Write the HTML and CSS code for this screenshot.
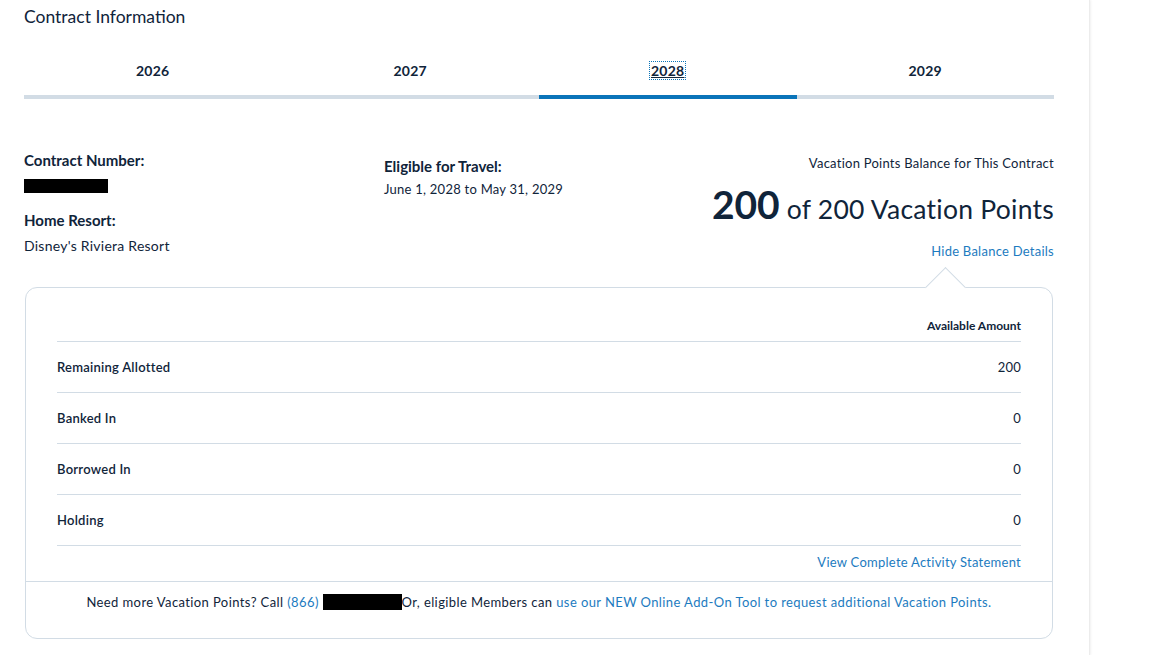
FILE: index.html
```html
<!DOCTYPE html>
<html lang="en">
<head>
    <meta charset="UTF-8">
    <meta name="viewport" content="width=device-width, initial-scale=1.0">
    <title>Contract Information</title>
    <link rel="stylesheet" href="styles.css">
</head>
<body>
    <div class="page">
        <h2 class="title">Contract Information</h2>

        <div class="tabs">
            <a class="tab">2026</a>
            <a class="tab">2027</a>
            <a class="tab active"><span class="focus">2028</span></a>
            <a class="tab">2029</a>
        </div>

        <div class="info">
            <div class="info-col">
                <div class="label">Contract Number:</div>
                <div class="redacted contract-no"></div>
                <div class="label home">Home Resort:</div>
                <div class="value">Disney's Riviera Resort</div>
            </div>
            <div class="info-col travel">
                <div class="label">Eligible for Travel:</div>
                <div class="value small">June 1, 2028 to May 31, 2029</div>
            </div>
            <div class="balance">
                <div class="balance-label">Vacation Points Balance for This Contract</div>
                <div class="balance-total"><strong>200</strong> of 200 Vacation Points</div>
                <a class="link toggle">Hide Balance Details</a>
            </div>
        </div>

        <div class="details">
            <table class="points">
                <thead>
                    <tr>
                        <th></th>
                        <th class="amount">Available Amount</th>
                    </tr>
                </thead>
                <tbody>
                    <tr><td>Remaining Allotted</td><td class="amount">200</td></tr>
                    <tr><td>Banked In</td><td class="amount">0</td></tr>
                    <tr><td>Borrowed In</td><td class="amount">0</td></tr>
                    <tr><td>Holding</td><td class="amount">0</td></tr>
                </tbody>
            </table>
            <div class="statement">
                <a class="link">View Complete Activity Statement</a>
            </div>
            <div class="footer-note">
                Need more Vacation Points? Call <a class="link">(866)</a> <span class="redacted phone"></span>Or, eligible Members can <a class="link">use our NEW Online Add-On Tool to request additional Vacation Points.</a>
            </div>
        </div>
    </div>
</body>
</html>
```

FILE: styles.css
```css
* {
    margin: 0;
    padding: 0;
    box-sizing: border-box;
}
body {
    font-family: Lato, "Open Sans", Arial, sans-serif;
    color: #10243a;
    background: #fff;
    letter-spacing: 0.25px;
}
.page {
    width: 1090px;
    min-height: 655px;
    padding: 5px 35px 0 24px;
    border-right: 1px solid #ececec;
    box-shadow: 1px 0 2px rgba(0,0,0,0.06);
}
.link {
    color: #1d7bc0;
    text-decoration: none;
    cursor: pointer;
}
.title {
    font-size: 17.5px;
    font-weight: 400;
    line-height: 24px;
    letter-spacing: 0;
}

/* year tabs */
.tabs {
    display: grid;
    grid-template-columns: repeat(4, 1fr);
    margin-top: 16px;
    border-bottom: 4px solid #d2dce5;
}
.tab {
    display: flex;
    align-items: center;
    justify-content: center;
    font-size: 14px;
    font-weight: 700;
    color: #10243a;
    margin-bottom: -4px;
    border-bottom: 4px solid transparent;
    height: 54px;
}
.tab.active {
    border-bottom-color: #0a74b9;
}
.focus {
    outline: 1px dotted #0a74b9;
    text-decoration: underline;
    padding: 0 1px;
}

/* contract summary */
.info {
    display: grid;
    grid-template-columns: 360px 1fr auto;
    margin-top: 51px;
}
.label {
    font-size: 15px;
    font-weight: 700;
    line-height: 20px;
    letter-spacing: 0;
}
.value {
    font-size: 14px;
    line-height: 20px;
    margin-top: 6px;
}
.value.small {
    font-size: 13px;
    margin-top: 3px;
}
.redacted {
    display: inline-block;
    background: #000;
}
.contract-no {
    display: block;
    width: 84px;
    height: 14px;
    margin-top: 9px;
}
.home {
    margin-top: 17px;
}
.travel {
    padding-top: 6px;
}
.balance {
    text-align: right;
}
.balance-label {
    font-size: 13px;
    line-height: 26px;
}
.balance-total {
    font-size: 26.5px;
    line-height: 38px;
    margin-top: 9px;
}
.balance-total strong {
    font-size: 39px;
    font-weight: 700;
    letter-spacing: 0;
}
.toggle {
    display: inline-block;
    font-size: 13px;
    line-height: 20px;
    margin-top: 13px;
}

/* balance details card */
.details {
    position: relative;
    margin: 26px 1px 0;
    border: 1px solid #d2dce5;
    border-radius: 12px;
}
.details::before {
    content: "";
    position: absolute;
    top: -15px;
    right: 92px;
    width: 28px;
    height: 28px;
    background: #fff;
    border-top: 1px solid #d2dce5;
    border-left: 1px solid #d2dce5;
    transform: rotate(45deg);
}
.points {
    width: calc(100% - 62px);
    margin: 0 31px;
    border-collapse: collapse;
    font-size: 13px;
}
.points th {
    font-size: 12px;
    font-weight: 700;
    padding: 31px 0 8px;
    line-height: 14px;
    letter-spacing: 0;
}
.points td {
    height: 51px;
    border-top: 1px solid #d2dce5;
}
.points tbody tr:last-child td {
    border-bottom: 1px solid #d2dce5;
}
.points td:first-child {
    font-weight: 600;
}
.amount {
    text-align: right;
}
.statement {
    text-align: right;
    padding: 7px 31px 10px;
    font-size: 13px;
    line-height: 18px;
}
.footer-note {
    border-top: 1px solid #d2dce5;
    text-align: center;
    font-size: 13px;
    line-height: 18px;
    letter-spacing: 0.4px;
    padding: 11px 0 27px;
}
.phone {
    width: 79px;
    height: 16px;
    vertical-align: -3px;
}
```
